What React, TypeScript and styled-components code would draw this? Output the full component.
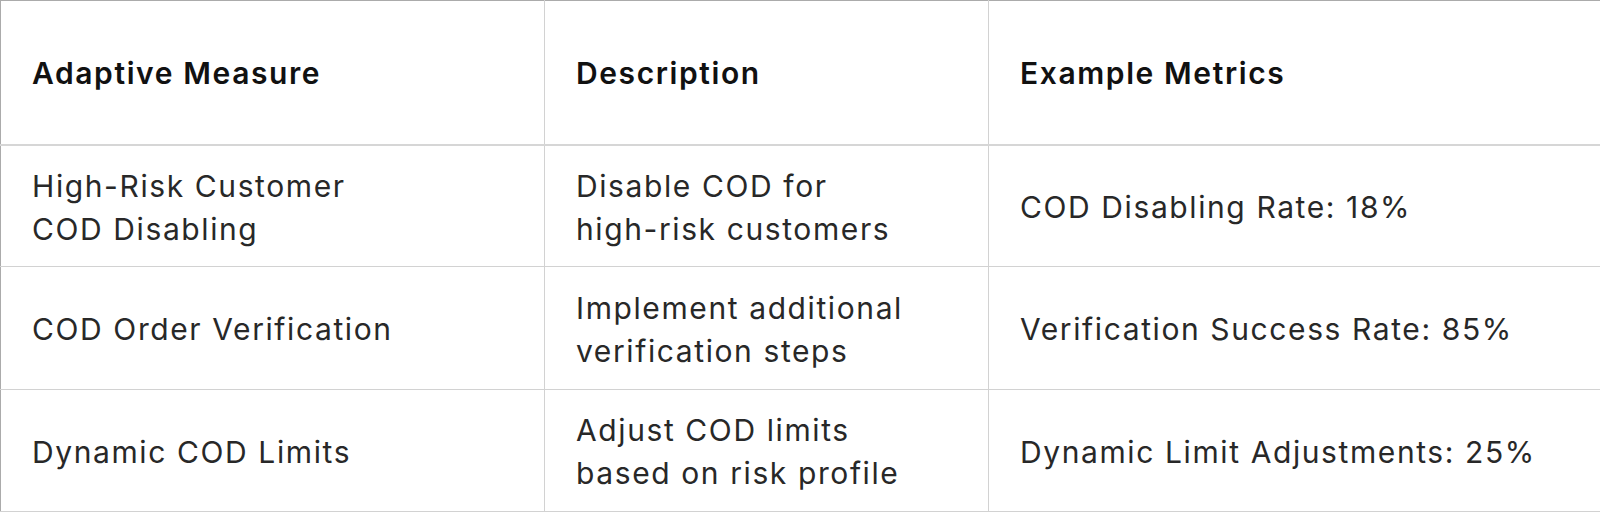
import React from "react";
import styled, { createGlobalStyle } from "styled-components";

const Global = createGlobalStyle`
  html, body { margin: 0; padding: 0; background: #ffffff; }
  body { font-family: "Inter", "Lato", sans-serif; }
`;

const Table = styled.table`
  width: 1600px;
  height: 512px;
  border-collapse: collapse;
  table-layout: fixed;
  box-sizing: border-box;
  border: 1px solid #ababab;
  color: #282828;
`;

const Col = styled.col<{ $w: number }>`
  width: ${(p) => p.$w}px;
`;

const HeadRow = styled.tr`
  height: 144px;
`;

const BodyRow = styled.tr`
  height: 122px;
`;

const Th = styled.th`
  text-align: left;
  vertical-align: middle;
  padding: 2px 20px 0 31px;
  font-size: 30px;
  font-weight: 600;
  letter-spacing: 1.6px;
  color: #111111;
  border-right: 1px solid #d2d2d2;
  border-bottom: 2px solid #d6d6d6;
`;

const Td = styled.td`
  text-align: left;
  vertical-align: middle;
  padding: 4px 20px 0 31px;
  font-size: 30px;
  font-weight: 400;
  line-height: 43px;
  letter-spacing: 1.6px;
  border-right: 1px solid #d2d2d2;
  border-bottom: 1px solid #d2d2d2;
`;

const Line = styled.span`
  display: block;
  white-space: nowrap;
`;

const rows = [
  {
    measure: ["High-Risk Customer", "COD Disabling"],
    desc: ["Disable COD for", "high-risk customers"],
    metric: "COD Disabling Rate: 18%",
  },
  {
    measure: ["COD Order Verification"],
    desc: ["Implement additional", "verification steps"],
    metric: "Verification Success Rate: 85%",
  },
  {
    measure: ["Dynamic COD Limits"],
    desc: ["Adjust COD limits", "based on risk profile"],
    metric: "Dynamic Limit Adjustments: 25%",
  },
];

export default function App() {
  return (
    <>
      <Global />
      <Table>
        <colgroup>
          <Col $w={544} />
          <Col $w={444} />
          <Col $w={612} />
        </colgroup>
        <thead>
          <HeadRow>
            <Th>Adaptive Measure</Th>
            <Th>Description</Th>
            <Th>Example Metrics</Th>
          </HeadRow>
        </thead>
        <tbody>
          {rows.map((r) => (
            <BodyRow key={r.metric}>
              <Td>
                {r.measure.map((l) => (
                  <Line key={l}>{l}</Line>
                ))}
              </Td>
              <Td>
                {r.desc.map((l) => (
                  <Line key={l}>{l}</Line>
                ))}
              </Td>
              <Td>
                <Line>{r.metric}</Line>
              </Td>
            </BodyRow>
          ))}
        </tbody>
      </Table>
    </>
  );
}
